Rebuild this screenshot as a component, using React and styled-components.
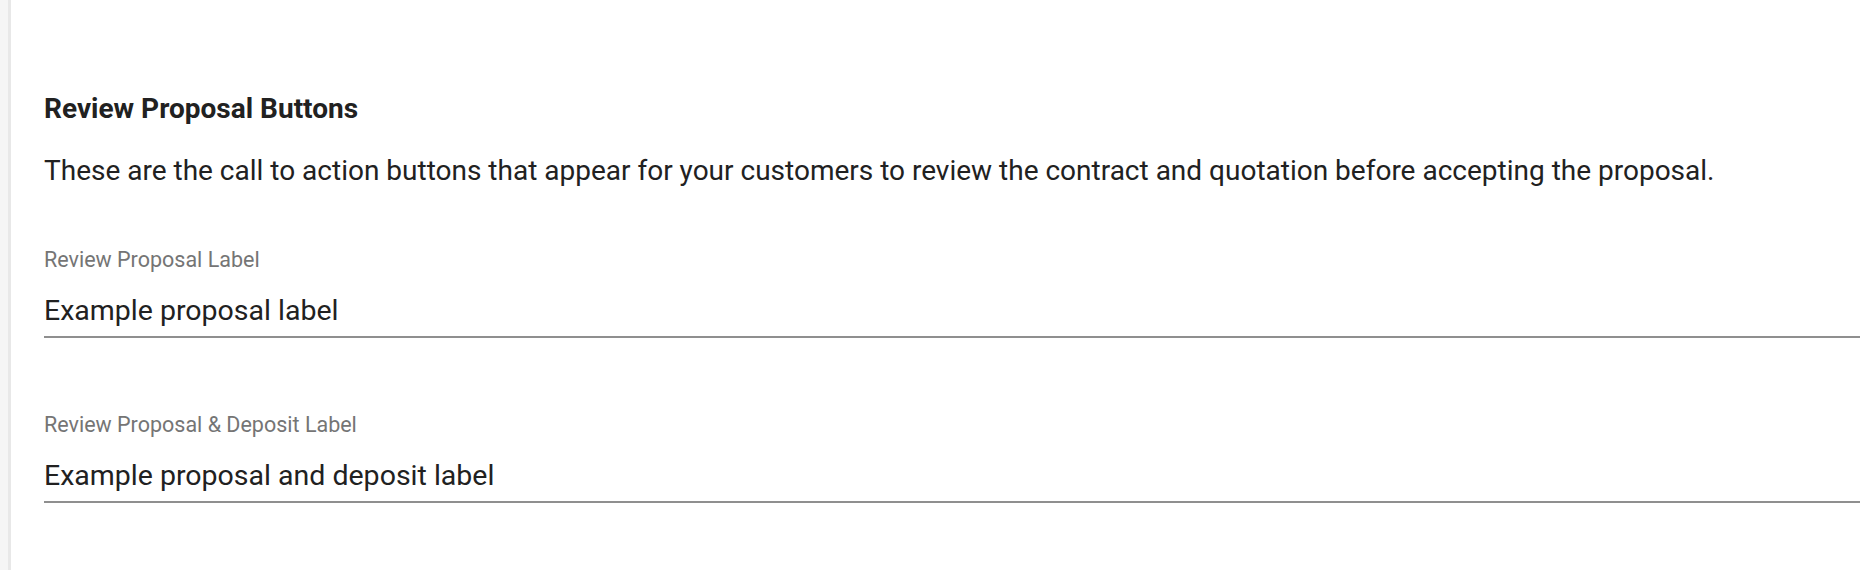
import React from "react";
import styled, { createGlobalStyle } from "styled-components";

const Global = createGlobalStyle`
  html, body {
    margin: 0;
    padding: 0;
    background: #ffffff;
  }
  body {
    font-family: Roboto, "Noto Sans", "Liberation Sans", sans-serif;
    color: #212121;
    -webkit-font-smoothing: antialiased;
  }
`;

const Layout = styled.div`
  display: flex;
  min-height: 570px;
  overflow: hidden;
`;

const Rail = styled.div`
  flex: 0 0 8px;
  background: #f5f5f5;
  border-right: 3px solid #e8e8e8;
`;

const Content = styled.main`
  flex: 1;
  padding: 93px 0 0 33px;
  display: flex;
  flex-direction: column;
`;

const Title = styled.h2`
  margin: 0;
  font-size: 28px;
  line-height: 32px;
  font-weight: 700;
  color: #212121;
`;

const Description = styled.p`
  margin: 28px 0 0;
  font-size: 28px;
  line-height: 36px;
  font-weight: 400;
  color: #212121;
`;

const FieldList = styled.div`
  display: flex;
  flex-direction: column;
  gap: 74px;
  margin-top: 58px;
`;

const Field = styled.label`
  display: flex;
  flex-direction: column;
  gap: 20px;
`;

const FieldLabel = styled.span`
  font-size: 21.5px;
  line-height: 26px;
  color: #757575;
`;

const Input = styled.input`
  font-family: inherit;
  font-size: 28.5px;
  line-height: 36px;
  height: 36px;
  color: #212121;
  border: none;
  border-bottom: 2px solid #8f8f8f;
  padding: 0 0 7px;
  margin: 0;
  outline: none;
  background: transparent;
  width: 100%;
  box-sizing: content-box;
`;

const fields = [
  { label: "Review Proposal Label", value: "Example proposal label" },
  { label: "Review Proposal & Deposit Label", value: "Example proposal and deposit label" },
];

export default function App() {
  return (
    <>
      <Global />
      <Layout>
        <Rail />
        <Content>
          <Title>Review Proposal Buttons</Title>
          <Description>
            These are the call to action buttons that appear for your customers to review the contract and quotation before accepting the proposal.
          </Description>
          <FieldList>
            {fields.map((f) => (
              <Field key={f.label}>
                <FieldLabel>{f.label}</FieldLabel>
                <Input defaultValue={f.value} readOnly />
              </Field>
            ))}
          </FieldList>
        </Content>
      </Layout>
    </>
  );
}
